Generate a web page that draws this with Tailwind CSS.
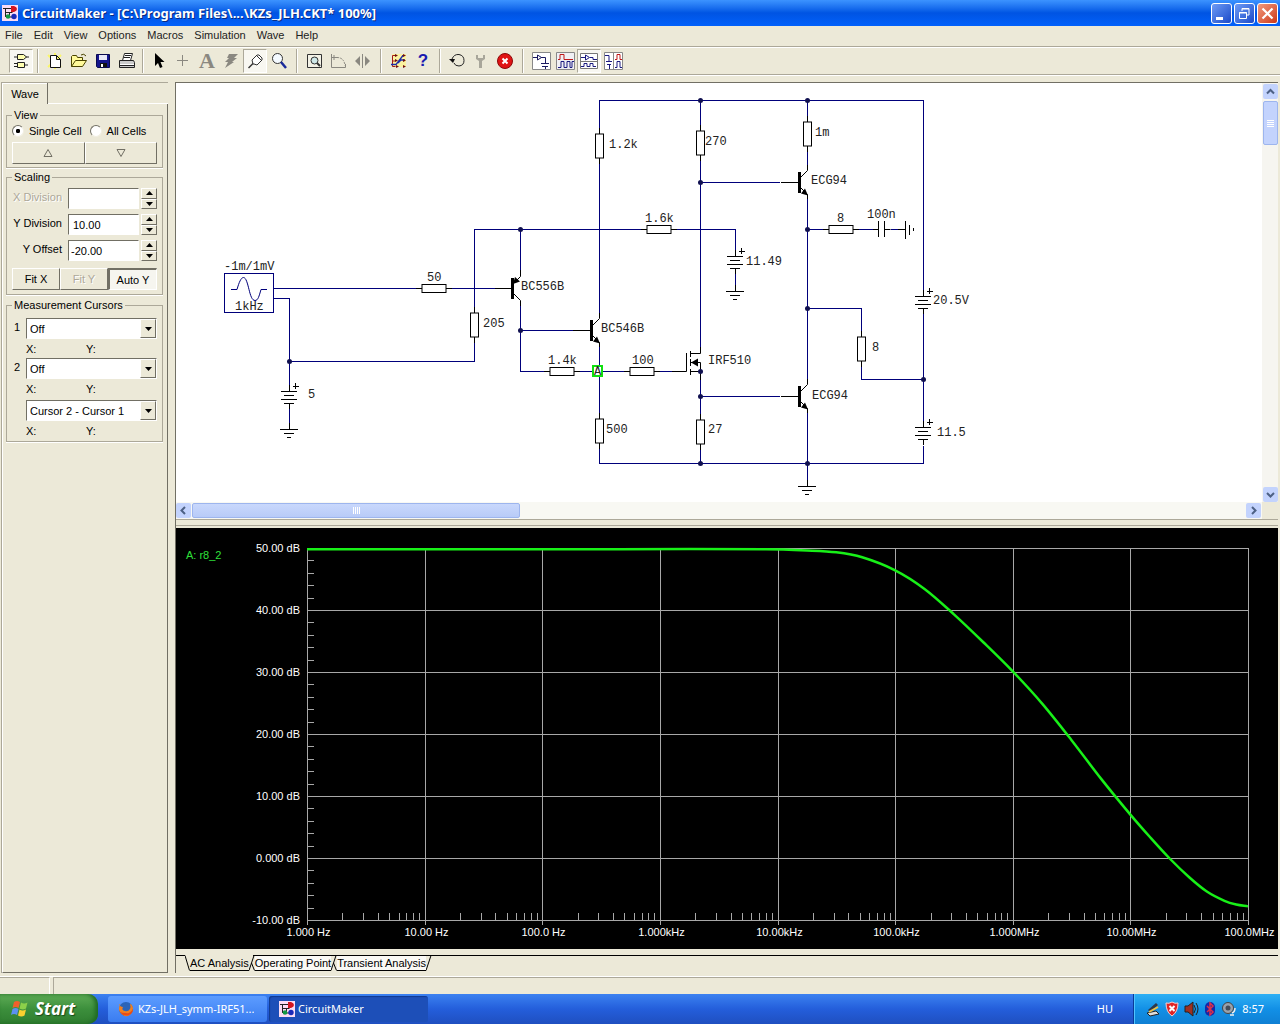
<!DOCTYPE html>
<html lang="en">
<head>
  <meta charset="UTF-8" />
  <meta name="viewport" content="width=device-width, initial-scale=1.0" />
  <title>CircuitMaker</title>
  <script src="https://cdn.jsdelivr.net/npm/@tailwindcss/browser@4"></script>
</head>
<body class="h-screen flex flex-col overflow-hidden bg-[#ece9d8] text-black text-[11px] leading-[14px] font-['Liberation_Sans',Arial,sans-serif]">

  <!-- Shared logo -->
  <svg class="hidden">
    <symbol id="logo" viewBox="0 0 16 16">
      <rect width="16" height="16" fill="#fbdcf4" />
      <path d="M1 3.500h9M3.500 3v9M3.500 7.500h7M7.500 7v4" fill="none" stroke="#222" />
      <path d="M4 12h6" stroke="#222" />
      <path d="M9 1h3q3 1 3 3t-3 3H9z" fill="#d31420" />
      <circle cx="6" cy="11.500" r="2.300" fill="#139a44" />
      <circle cx="12" cy="11.500" r="2.700" fill="#1a2ab8" />
    </symbol>
  </svg>

  <!-- Title bar -->
  <header class="flex h-[26px] shrink-0 items-center gap-1 bg-linear-to-b from-[#3c93ff] via-[#0054e3] to-[#0261fb] pl-0.5 pr-0.5">
    <svg class="size-4"><use href="#logo" /></svg>
    <h1 class="flex-1 truncate text-[13px] leading-[18px] font-bold text-white font-['Noto_Sans','Open_Sans',sans-serif] text-shadow-[1px_1px_0_#0a2a80]">CircuitMaker - [C:\Program Files\...\KZs_JLH.CKT* 100%]</h1>
    <div class="flex gap-0.5">
      <button aria-label="Minimize" class="h-[21px] w-[21px] rounded-[3px] border border-white bg-linear-to-br from-[#6f9bf5] to-[#1c48c8]">
        <svg class="size-[19px]" viewBox="0 0 19 19"><path d="M4 13h7v3H4z" fill="#fff" /></svg>
      </button>
      <button aria-label="Restore" class="h-[21px] w-[21px] rounded-[3px] border border-white bg-linear-to-br from-[#6f9bf5] to-[#1c48c8]">
        <svg class="size-[19px]" viewBox="0 0 19 19" fill="none" stroke="#fff"><path d="M7 7V4.500h7V11h-2M7 5h7" /><path d="M4.500 8.500h7v6h-7zM4 9h8" /></svg>
      </button>
      <button aria-label="Close" class="h-[21px] w-[21px] rounded-[3px] border border-white bg-linear-to-br from-[#f0997c] to-[#cc3310]">
        <svg class="size-[19px]" viewBox="0 0 19 19"><path d="M4.500 4.500l10 10M14.500 4.500l-10 10" stroke="#fff" stroke-width="2.200" /></svg>
      </button>
    </div>
  </header>

  <!-- Menu -->
  <nav class="flex h-5 shrink-0 items-center gap-[11px] pb-0.5 pl-[5px] text-[#222]">
    <a href="#">File</a>
    <a href="#">Edit</a>
    <a href="#">View</a>
    <a href="#">Options</a>
    <a href="#">Macros</a>
    <a href="#">Simulation</a>
    <a href="#">Wave</a>
    <a href="#">Help</a>
  </nav>

  <!-- Toolbar -->
  <div class="flex h-[29px] shrink-0 items-center border-y border-[#aca899] pl-[9px] shadow-[inset_0_1px_0_#fff,0_1px_0_#fff]">
    <button aria-label="Parts" class="size-6 border border-[#aca899] border-r-white border-b-white bg-[#f8f7f1]">
      <svg class="size-[22px]" viewBox="0 0 22 22" fill="#ffffb0" stroke="#222"><path d="M7.500 4.500h6l3 2.500-3 2.500h-6zM7.500 12.500h7v5h-7zM4 7h3.500M16 7h3M4 13.500h3.500M4 16.500h3.500M14.500 15H18" /></svg>
    </button>
    <i class="mx-1 h-6 w-0.5 border-l border-[#aca899] border-r border-r-white"></i>
    <button aria-label="New" class="size-6">
      <svg class="size-6" viewBox="0 0 24 24"><path d="M5 6l13 12M5 18L18 6M12 4v16" stroke="#fbf768" stroke-width="2" /><path d="M7.500 6.500h6l4 4v8h-10zM13.500 6.500v4h4" fill="#fff" stroke="#111" /></svg>
    </button>
    <button aria-label="Open" class="size-6">
      <svg class="size-6" viewBox="0 0 24 24" fill="#fffa9a" stroke="#4a4400"><path d="M4.500 17.500v-10l1-1h4l1 2h5v3M4.500 17.500l4-6h11l-4 6z" /><path d="M14 6q3-2 5 1" fill="none" /></svg>
    </button>
    <button aria-label="Save" class="size-6">
      <svg class="size-6" viewBox="0 0 24 24"><path d="M5.500 5.500h13v13h-12l-1-1z" fill="#15158c" stroke="#0a0a50" /><path d="M8 6h8v5H8z" fill="#e8e8f8" /><path d="M9 14h7v4H9z" fill="#111" /><path d="M10 15h2v3h-2z" fill="#fff" /></svg>
    </button>
    <button aria-label="Print" class="size-6">
      <svg class="size-6" viewBox="0 0 24 24" stroke="#222"><path d="M7.500 11.500l2-7h8l-2 7z" fill="#fff" /><path d="M10 6.500h6M9 8.500h6" /><path d="M4.500 11.500h14l1 2v5h-15z" fill="#ccc" /><path d="M5 15.500h14" stroke="#fff" /><path d="M5 16.500h14" /></svg>
    </button>
    <i class="mx-[3px] h-6 w-0.5 border-l border-[#aca899] border-r border-r-white"></i>
    <button aria-label="Select" class="size-6">
      <svg class="size-6" viewBox="0 0 24 24"><path d="M8 4v13l3-3 2 5 2.500-1-2-5h4z" fill="#000" /></svg>
    </button>
    <button aria-label="Wire" class="size-6">
      <svg class="size-6" viewBox="0 0 24 24"><path d="M6 11.500h11M11.500 6v11" stroke="#8a8880" /></svg>
    </button>
    <button aria-label="Text" class="size-6 text-[22px] leading-6 font-bold text-[#8a8880] font-['Liberation_Serif',serif]">A</button>
    <button aria-label="Delete" class="size-6">
      <svg class="size-6" viewBox="0 0 24 24"><path d="M10 5h9l-4 4h3l-5 4h2l-9 6 3-6H6l4-4H8z" fill="#8a8880" /></svg>
    </button>
    <button aria-label="Probe" class="size-6 border border-[#aca899] border-r-white border-b-white bg-[#f8f7f1]">
      <svg class="size-[22px]" viewBox="0 0 22 22" fill="none" stroke="#333"><path d="M4.500 18l5-5" stroke-width="1.500" /><path d="M9 14l-1-4 5-5h2l3 3v2l-5 5-3-1zM12 5l6 6" fill="#fff" /></svg>
    </button>
    <button aria-label="Zoom" class="size-6">
      <svg class="size-6" viewBox="0 0 24 24"><circle cx="10.500" cy="9.500" r="5" fill="#f4faff" stroke="#333" /><path d="M14 13l5 6" stroke="#1a2a9a" stroke-width="2.500" /></svg>
    </button>
    <i class="mx-[5px] h-6 w-0.5 border-l border-[#aca899] border-r border-r-white"></i>
    <button aria-label="Fit" class="size-6">
      <svg class="size-6" viewBox="0 0 24 24" fill="none" stroke="#333"><path d="M4.500 5.500h14v13h-14z" fill="#f3f2e6" /><circle cx="11.500" cy="11.500" r="3.500" fill="#cfe8e8" /><path d="M14 14l3 3" stroke-width="2" /></svg>
    </button>
    <button aria-label="Rotate" class="size-6">
      <svg class="size-6" viewBox="0 0 24 24" fill="none" stroke="#8a8880"><path d="M4.500 5v13.500h14V15M4.500 8.500h6M7 6v5" /><path d="M10 8.500q7 0 8 8" stroke-dasharray="2 1" /></svg>
    </button>
    <button aria-label="Mirror" class="size-6">
      <svg class="size-6" viewBox="0 0 24 24"><path d="M9 7v10l-5-5zM14 7v10l5-5z" fill="#8a8880" /><path d="M11.500 5v14" stroke="#8a8880" /></svg>
    </button>
    <i class="mx-[5px] h-6 w-0.5 border-l border-[#aca899] border-r border-r-white"></i>
    <button aria-label="Digital options" class="size-6">
      <svg class="size-6" viewBox="0 0 24 24" fill="none"><path d="M5 5h14v13H5z" fill="#fbf2a0" /><path d="M8.500 6.500h-3v11h3M5.500 12h3M15 6.500h3" stroke="#a01818" /><path d="M4 15.500h5l7-9M11 14l3-3h4" stroke="#1c2ca8" stroke-width="1.300" /><path d="M8 5l3 1.500L8 8zM8 10l3 1.500L8 13zM9 16l3 1.500L9 19zM16 5l3 1.500L16 8zM16 10l3 1.500-3 1.500zM16 16l3 1.500-3 1.500z" fill="#701010" /></svg>
    </button>
    <button aria-label="Help" class="size-6 text-[17px] leading-6 font-bold text-[#1a1ab0]">?</button>
    <i class="mx-1 h-6 w-0.5 border-l border-[#aca899] border-r border-r-white"></i>
    <button aria-label="Reset" class="size-6">
      <svg class="size-6" viewBox="0 0 24 24"><path d="M7 10q2-5 7-4.500 5 1 5 6t-5 5.500q-4 0-5-3" fill="none" stroke="#222" /><path d="M4 10h6l-2 4z" fill="#111" /></svg>
    </button>
    <button aria-label="Step" class="size-6">
      <svg class="size-6" viewBox="0 0 24 24"><path d="M7 6v4l3 2v7h3v-7l3-2V6h-2v3h-5V6z" fill="#a8a69a" /></svg>
    </button>
    <button aria-label="Stop" class="size-6">
      <svg class="size-6" viewBox="0 0 24 24"><circle cx="12" cy="12" r="7.500" fill="#e01414" stroke="#8c0808" /><path d="M9.500 9.500l5 5M14.500 9.500l-5 5" stroke="#fff" stroke-width="2" /></svg>
    </button>
    <i class="mx-[5px] h-6 w-0.5 border-l border-[#aca899] border-r border-r-white"></i>
    <button aria-label="Schematic view" class="size-6">
      <svg class="size-6" viewBox="0 0 24 24" fill="none" stroke="#1a1a60"><path d="M3.500 3.500h18v17h-18z" fill="#fff" stroke="#888" /><path d="M4 8.500h4M8.500 6v5l4-2.500zM12 8.500h4.500V14M12 14.500h8M13 17.500h6M16.500 17v3" /></svg>
    </button>
    <button aria-label="Waveform view" class="size-6">
      <svg class="size-6" viewBox="0 0 24 24" fill="none" stroke="#1a1a80"><path d="M3.500 3.500h18v17h-18z" fill="#f0f0f4" stroke="#888" /><path d="M5 10.500h2v-5h4v5h9" stroke="#c01818" /><path d="M5 18.500h3v-6h3v6h3v-6h3v6h2v-6h2" /></svg>
    </button>
    <button aria-label="Split view" class="size-6 border border-[#aca899] border-r-white border-b-white bg-[#f8f7f1]">
      <svg class="size-[22px]" viewBox="0 0 22 22" fill="none" stroke="#1a1a80"><path d="M2.500 3.500h17v15h-17zM3 11.500h16" fill="#fff" stroke="#777" /><path d="M3 7.500h4M7.500 5v5l4-2.500zM12 7.500h3v2h4" /><path d="M3 16.500h3v-3h3v3h3v-3h3v3h3" /></svg>
    </button>
    <button aria-label="Side view" class="size-6">
      <svg class="size-6" viewBox="0 0 24 24" fill="none" stroke="#1a1a80"><path d="M3.500 3.500h18v17h-18zM12.500 4v16" fill="#fff" stroke="#888" /><path d="M4 6.500h4V12M5 12.500h6M6 15.500h4M8.500 15v5" /><path d="M14 10.500h2v-5h3v5h2" stroke="#c01818" /><path d="M14 18.500h2v-6h3v6h2" /></svg>
    </button>
  </div>

  <main class="flex min-h-0 flex-1 pt-[7px] pb-[3px]">

    <!-- Wave panel -->
    <aside class="ml-px flex w-[167px] shrink-0 flex-col border-t border-l border-[#aca899]">
      <div class="flex h-[21px] items-stretch">
        <button class="w-[46px] border-r border-[#716f64] border-l border-l-white text-center shadow-[inset_0_1px_0_#fff]">Wave</button>
        <div class="flex-1 border-b border-white"></div>
      </div>
      <div class="flex-1 border-r border-b border-l border-[#716f64] border-l-white pt-1 pr-1 pl-[3px]">

        <fieldset class="mb-0.5 border border-[#aca899] px-[5px] pt-0.5 pb-[3px] shadow-[0_1px_0_#fff]">
          <legend class="px-0.5">View</legend>
          <div class="flex h-[14px] items-center gap-2">
            <label class="flex items-center gap-[5px]"><input type="radio" name="cells" checked class="size-3 appearance-none rounded-full border border-[#716f64] border-r-[#f1efe2] border-b-[#f1efe2] bg-white bg-radial from-black from-25% to-white to-35%" />Single Cell</label>
            <label class="flex items-center gap-[5px]"><input type="radio" name="cells" class="size-3 appearance-none rounded-full border border-[#716f64] border-r-[#f1efe2] border-b-[#f1efe2] bg-white" />All Cells</label>
          </div>
          <div class="mt-1 flex h-[22px]">
            <button aria-label="Previous cell" class="flex flex-1 items-center justify-center border border-white border-r-[#716f64] border-b-[#716f64]"><svg class="h-[10px] w-3" viewBox="0 0 12 10"><path d="M6 1.500l4 7H2z" fill="none" stroke="#716f64" /></svg></button>
            <button aria-label="Next cell" class="flex flex-1 items-center justify-center border border-white border-r-[#716f64] border-b-[#716f64]"><svg class="h-[10px] w-3" viewBox="0 0 12 10"><path d="M6 8.500l4-7H2z" fill="none" stroke="#716f64" /></svg></button>
          </div>
        </fieldset>

        <fieldset class="mb-[3px] border border-[#aca899] px-[5px] pt-1 pb-1 shadow-[0_1px_0_#fff]">
          <legend class="px-0.5">Scaling</legend>
          <div class="flex flex-col gap-[5px]">
            <div class="flex h-[21px] gap-0.5">
              <label for="xdiv" class="flex-1 pt-0.5 pr-1 text-right whitespace-nowrap text-[#aca899] text-shadow-[1px_1px_0_#fff]">X Division</label>
              <input id="xdiv" type="text" class="w-[71px] border border-[#716f64] border-r-white border-b-white bg-white px-1" />
              <div class="flex w-4 flex-col" data-spin></div>
            </div>
            <div class="flex h-[21px] gap-0.5">
              <label for="ydiv" class="flex-1 pt-0.5 pr-1 text-right whitespace-nowrap">Y Division</label>
              <input id="ydiv" type="text" value="10.00" class="w-[71px] border border-[#716f64] border-r-white border-b-white bg-white px-1" />
              <div class="flex w-4 flex-col" data-spin></div>
            </div>
            <div class="flex h-[21px] gap-0.5">
              <label for="yoff" class="flex-1 pt-0.5 pr-1 text-right whitespace-nowrap">Y Offset</label>
              <input id="yoff" type="text" value="-20.00" class="w-[71px] border border-[#716f64] border-r-white border-b-white bg-white px-0.5" />
              <div class="flex w-4 flex-col" data-spin></div>
            </div>
          </div>
          <div class="mt-[7px] flex h-[22px]">
            <button class="flex-1 border border-white border-r-[#716f64] border-b-[#716f64]">Fit X</button>
            <button disabled class="flex-1 border border-white border-r-[#716f64] border-b-[#716f64] text-[#aca899] text-shadow-[1px_1px_0_#fff]">Fit Y</button>
            <button class="flex-1 border-2 border-r border-b border-[#716f64] border-r-white border-b-white bg-[#f6f5ef]">Auto Y</button>
          </div>
        </fieldset>

        <fieldset class="border border-[#aca899] px-[5px] pt-1.5 pb-px shadow-[0_1px_0_#fff]">
          <legend class="px-0.5">Measurement Cursors</legend>
          <div class="flex h-[21px]">
            <label for="cur1" class="w-[14px] pt-0.5 pl-0.5">1</label>
            <div class="relative flex-1">
              <select id="cur1" class="h-full w-full appearance-none border border-[#716f64] border-r-white border-b-white bg-white px-[3px]"><option>Off</option></select>
              <span class="pointer-events-none absolute top-px right-px bottom-px flex w-4 items-center justify-center border border-white border-r-[#716f64] border-b-[#716f64] bg-[#ece9d8]"><svg class="h-1 w-[7px]"><path d="M0 0h7L3.500 4z" /></svg></span>
            </div>
          </div>
          <div class="flex h-[19px] items-center pl-[14px]"><span class="w-[60px]">X:</span><span>Y:</span></div>
          <div class="flex h-[21px]">
            <label for="cur2" class="w-[14px] pt-0.5 pl-0.5">2</label>
            <div class="relative flex-1">
              <select id="cur2" class="h-full w-full appearance-none border border-[#716f64] border-r-white border-b-white bg-white px-[3px]"><option>Off</option></select>
              <span class="pointer-events-none absolute top-px right-px bottom-px flex w-4 items-center justify-center border border-white border-r-[#716f64] border-b-[#716f64] bg-[#ece9d8]"><svg class="h-1 w-[7px]"><path d="M0 0h7L3.500 4z" /></svg></span>
            </div>
          </div>
          <div class="flex h-[19px] items-center pl-[14px]"><span class="w-[60px]">X:</span><span>Y:</span></div>
          <div class="mt-0.5 flex h-[21px] pl-[14px]">
            <div class="relative flex-1">
              <select aria-label="Cursor difference" class="h-full w-full appearance-none border border-[#716f64] border-r-white border-b-white bg-white px-[3px]"><option>Cursor 2 - Cursor 1</option></select>
              <span class="pointer-events-none absolute top-px right-px bottom-px flex w-4 items-center justify-center border border-white border-r-[#716f64] border-b-[#716f64] bg-[#ece9d8]"><svg class="h-1 w-[7px]"><path d="M0 0h7L3.500 4z" /></svg></span>
            </div>
          </div>
          <div class="flex h-[19px] items-center pl-[14px]"><span class="w-[60px]">X:</span><span>Y:</span></div>
        </fieldset>
      </div>
    </aside>

    <!-- Workspace -->
    <section class="ml-[7px] mr-0.5 flex min-w-0 flex-1 flex-col border-l border-[#716f64]">
      <div class="flex h-[420px] shrink-0 border-t border-[#716f64]">
        <div class="min-w-0 flex-1 overflow-hidden bg-white">
          <svg class="h-[419px] w-[1086px] text-[12px] font-['Liberation_Mono',monospace]" viewBox="176 83 1086 419" fill="none">
            <defs>
              <g id="rv"><path d="M.5-18V18" stroke="#000" /><rect x="-3.500" y="-12" width="8" height="24" fill="#fff" stroke="#000" /></g>
              <g id="rh"><path d="M-18 .5H18" stroke="#000" /><rect x="-12" y="-3.500" width="24" height="8" fill="#fff" stroke="#000" /></g>
              <g id="bat" stroke="#000"><path d="M.5-6V0M.5 12v6M-8 .5H8M-5 4.500H5M-8 8.500H8M-5 12.500H5M4-4.500h6M6.500-8v6" /></g>
              <g id="gnd" stroke="#000"><path d="M.5-6V0M-9 .5H9M-5 4.500H5M-2 8.500H2" /></g>
              <g id="npn"><path d="M-26 .5H-8" stroke="#000" /><path d="M-7.500-10v21" stroke="#000" stroke-width="3" /><path d="M-6-5L.5-11.500V-17M-6 6L.5 12.500V17" stroke="#000" /><path d="M1 13.500l-7-2 4-5z" fill="#000" /></g>
            </defs>

            <!-- wires -->
            <path stroke="#00007b" shape-rendering="crispEdges" d="M273 288.500H495M273 298.500h16.500V385M289.500 361.500h185V229.500h261V250M520.500 229.500V270M520.500 304v67.500H598M520.500 330.500H575M599.500 314V100.500h324V290M599.500 347V463.500M598 371.500h75M599 463.500h324.500V446M923.500 314V421M923.500 379.500h-62v-71h-54M700.500 100V353M700.500 371V463M700 182.500h80M700 396.500h80M807.500 100V166M807.500 198V380M807.500 412V480M807 229.500h20M857 229.500h16M891 229.500h8" />

            <use href="#rv" x="599" y="146" /><use href="#rv" x="700" y="143" /><use href="#rv" x="807" y="134" />
            <use href="#rv" x="474" y="325" /><use href="#rv" x="599" y="431" /><use href="#rv" x="700" y="432" /><use href="#rv" x="861" y="349" />
            <use href="#rh" x="434" y="288" /><use href="#rh" x="659" y="229" /><use href="#rh" x="841" y="229" />
            <use href="#rh" x="562" y="371" /><use href="#rh" x="642" y="371" />
            <use href="#bat" x="289" y="391" /><use href="#bat" x="735" y="256" /><use href="#bat" x="923" y="296" /><use href="#bat" x="923" y="427" />
            <path stroke="#00007b" d="M289.500 409V424M735.500 274V286" />
            <use href="#gnd" x="289" y="429" /><use href="#gnd" x="735" y="291" /><use href="#gnd" x="807" y="486" />
            <use href="#npn" x="599" y="330" /><use href="#npn" x="807" y="182" /><use href="#npn" x="807" y="396" />

            <!-- pnp -->
            <path stroke="#000" d="M495 288.500h17M514 283l6.500-6.500V270M514 294l6.500 6.500V306" />
            <path stroke="#000" stroke-width="3" d="M512.500 278v21" />
            <path fill="#000" d="M513 284l2-7 5 4.500z" />

            <!-- mosfet -->
            <path stroke="#000" d="M672 371.500h14.500V353M690.500 351v6M690.500 359v7M690.500 369v6M690 353.500h10.500V347M691 362.500h9.500V380M690 371.500h10" />
            <path fill="#000" d="M691 362.500l7-4v8z" />

            <!-- capacitor and side ground -->
            <path stroke="#000" d="M873 229.500h5.500M878.500 221v16M884.500 221v16M884.500 229.500h6M898 229.500h7.500M905.500 221v18M909.500 225v10M913.500 228v3" />

            <!-- source -->
            <rect x="224.500" y="273.500" width="49" height="39" stroke="#00007b" />
            <path stroke="#00007b" d="M231 289.500h6c2-7 4-12 6.500-12s4 6 5.500 12 3 11 6 11 4-4 6-11h6" />

            <g fill="#101050">
              <circle cx="520.500" cy="229.500" r="2.500" /><circle cx="520.500" cy="330.500" r="2.500" /><circle cx="289.500" cy="361.500" r="2.500" />
              <circle cx="700.500" cy="100.500" r="2.500" /><circle cx="807.500" cy="100.500" r="2.500" /><circle cx="700.500" cy="182.500" r="2.500" />
              <circle cx="807.500" cy="229.500" r="2.500" /><circle cx="807.500" cy="308.500" r="2.500" /><circle cx="923.500" cy="379.500" r="2.500" />
              <circle cx="700.500" cy="371.500" r="2.500" /><circle cx="700.500" cy="396.500" r="2.500" /><circle cx="700.500" cy="463.500" r="2.500" /><circle cx="807.500" cy="463.500" r="2.500" />
            </g>

            <rect x="593" y="366" width="9" height="10" fill="#fff" stroke="#10e010" stroke-width="2" />

            <g fill="#222">
              <text x="594" y="375">A</text>
              <text x="224" y="270">-1m/1mV</text><text x="235" y="310">1kHz</text><text x="427" y="281">50</text>
              <text x="483" y="327">205</text><text x="308" y="398">5</text><text x="521" y="290">BC556B</text>
              <text x="601" y="332">BC546B</text><text x="609" y="148">1.2k</text><text x="705" y="145">270</text>
              <text x="815" y="136">1m</text><text x="811" y="184">ECG94</text><text x="645" y="222">1.6k</text>
              <text x="837" y="222">8</text><text x="867" y="218">100n</text><text x="746" y="265">11.49</text>
              <text x="933" y="304">20.5V</text><text x="548" y="364">1.4k</text><text x="632" y="364">100</text>
              <text x="708" y="364">IRF510</text><text x="872" y="351">8</text><text x="812" y="399">ECG94</text>
              <text x="606" y="433">500</text><text x="708" y="433">27</text><text x="937" y="436">11.5</text>
            </g>
          </svg>
        </div>
        <!-- vertical scrollbar -->
        <div class="flex w-4 shrink-0 flex-col gap-0.5 bg-[#f6f5f0] pt-px pl-px">
          <button aria-label="Scroll up" class="flex size-[15px] items-center justify-center rounded-xs bg-[#c3d3fd]"><svg class="size-[9px]" viewBox="0 0 9 9"><path d="M1 6.500L4.500 3 8 6.500" fill="none" stroke="#4d6185" stroke-width="2" /></svg></button>
          <div class="flex h-[44px] w-[15px] flex-col items-center justify-center gap-px rounded-xs border border-[#9db5ee] bg-[#c3d3fd]">
            <i class="h-px w-[7px] bg-white"></i><i class="h-px w-[7px] bg-white"></i><i class="h-px w-[7px] bg-white"></i><i class="h-px w-[7px] bg-white"></i>
          </div>
          <button aria-label="Scroll down" class="mt-auto flex size-[15px] items-center justify-center rounded-xs bg-[#c3d3fd]"><svg class="size-[9px]" viewBox="0 0 9 9"><path d="M1 3L4.500 6.500 8 3" fill="none" stroke="#4d6185" stroke-width="2" /></svg></button>
        </div>
      </div>
      <!-- horizontal scrollbar -->
      <div class="flex h-[17px] shrink-0 pr-4">
        <div class="flex flex-1 items-center gap-px bg-[#f8f8f3]">
          <button aria-label="Scroll left" class="flex size-[15px] items-center justify-center rounded-xs bg-[#c3d3fd]"><svg class="size-[9px]" viewBox="0 0 9 9"><path d="M6 1L2.500 4.500 6 8" fill="none" stroke="#4d6185" stroke-width="2" /></svg></button>
          <div class="flex h-[15px] w-[328px] items-center justify-center gap-px rounded-xs border border-[#9db5ee] bg-linear-to-b from-[#c9d8fc] to-[#b8cbf8]">
            <i class="h-[7px] w-px bg-white"></i><i class="h-[7px] w-px bg-white"></i><i class="h-[7px] w-px bg-white"></i><i class="h-[7px] w-px bg-white"></i>
          </div>
          <button aria-label="Scroll right" class="ml-auto mr-px flex size-[15px] items-center justify-center rounded-xs bg-[#c3d3fd]"><svg class="size-[9px]" viewBox="0 0 9 9"><path d="M3 1l3.500 3.500L3 8" fill="none" stroke="#4d6185" stroke-width="2" /></svg></button>
        </div>
      </div>
      <div class="h-[9px] shrink-0 border-t border-[#aca899] pt-[5px]"><div class="h-px bg-[#aca899]"></div></div>

      <!-- plot -->
      <div class="min-h-0 flex-1 overflow-hidden bg-black"><svg id="plot" class="h-full w-full"></svg></div>

      <div class="mt-1.5 flex h-[18px] shrink-0 text-black">
        <div class="w-[9px] border-t border-black"></div>
        <svg class="h-4 w-[5px]" viewBox="0 0 5 16"><path d="M0 .5L4.500 15.500" fill="none" stroke="#000" /></svg>
        <button class="h-4 border-b border-black">AC Analysis</button>
        <svg class="h-4 w-[6px]" viewBox="0 0 6 16" fill="none" stroke="#000"><path d="M4 .5h2M5 .5L0 15.500M2.500 8L5.500 15.500" /></svg>
        <button class="h-4 border-y border-black bg-[#faf9f5]">Operating Point</button>
        <svg class="h-4 w-[6px]" viewBox="0 0 6 16" fill="none" stroke="#000"><path d="M0 .5h6M5 .5L0 15.500M2.500 8L5.500 15.500" /></svg>
        <button class="h-4 border-y border-black bg-[#faf9f5]">Transient Analysis</button>
        <svg class="h-4 w-[6px]" viewBox="0 0 6 16" fill="none" stroke="#000"><path d="M0 .5h6M5 .5L0 15.500" /></svg>
        <div class="flex-1 border-t border-black"></div>
      </div>
    </section>
  </main>

  <!-- Status bar -->
  <footer class="flex h-[18px] shrink-0 gap-[3px] border-t border-white">
    <div class="w-[50px] border-t border-r border-[#aca899] border-r-white"></div>
    <div class="flex-1 border-t border-l border-[#aca899]"></div>
  </footer>

  <!-- Taskbar -->
  <div class="flex h-[30px] shrink-0 items-stretch bg-linear-to-b from-[#3c81f0] via-[#245edb] to-[#1f4fc0] text-white font-['Noto_Sans',sans-serif]">
    <button class="flex w-[98px] items-center gap-1.5 rounded-r-[10px] bg-linear-to-b from-[#5eac56] via-[#3c8f3c] to-[#2f7d30] pl-[11px] text-[17px] leading-5 font-bold italic text-shadow-[1px_1px_1px_#1a4a1a] shadow-[inset_-3px_0_4px_#1f6a22] font-['Open_Sans','Noto_Sans',sans-serif]">
      <svg class="size-[18px]" viewBox="0 0 18 18"><path d="M3 2q3-2 6 0L7.500 8q-3-2-6 0z" fill="#f0602c" /><path d="M10 2.500q3 2 6.500 0L15 8.500q-3 2-6.500 0z" fill="#8cd04a" /><path d="M1.500 9q3-2 6 0L6 15q-3-2-6 0z" fill="#5c90f0" /><path d="M8.500 9.500q3 2 6.500 0l-1.500 6q-3 2-6.500 0z" fill="#fcd030" /></svg>
      Start
    </button>
    <div class="flex flex-1 items-center gap-0.5 pl-[10px]">
      <button class="flex h-[26px] w-[159px] items-center gap-1 rounded-[3px] bg-linear-to-b from-[#5c9cff] to-[#3a7cf0] pl-2.5">
        <svg class="size-4" viewBox="0 0 16 16"><circle cx="8" cy="8" r="7" fill="#2a64b8" /><path d="M2 3q-2 5 0 8 3 5 8 4 5-2 5-8-1-4-3-4 1 3 0 5-2 3-5 2-4-1-2-4-3 0-4-3z" fill="#f08020" /><path d="M2 11q4 5 9 3 4-2 4-6-3 5-7 4-4 0-6-1z" fill="#e84a18" /></svg>
        <span class="truncate">KZs-JLH_symm-IRF51...</span>
      </button>
      <button class="flex h-[26px] w-[159px] items-center gap-[3px] rounded-[3px] bg-[#1d4fb8] pl-2.5 shadow-[inset_1px_1px_1px_#123a90]">
        <svg class="size-4"><use href="#logo" /></svg>
        <span>CircuitMaker</span>
      </button>
    </div>
    <div class="flex items-center pr-5">HU</div>
    <div class="flex w-[147px] items-center gap-[3px] border-l border-[#0a3a98] bg-linear-to-b from-[#2eb0f4] via-[#1290e6] to-[#0f80d4] pl-[11px] shadow-[inset_1px_0_0_#50c4ff]">
      <svg class="size-4" viewBox="0 0 16 16"><path d="M2 12l9-2 3 3-9 2z" fill="#ddd" stroke="#222" /><path d="M3 9l8-7 2 2-8 7z" fill="#303848" /><path d="M4 11l9-5" stroke="#f0c040" stroke-width="2" /></svg>
      <svg class="size-4" viewBox="0 0 16 16"><path d="M8 1q3 2 6 1 0 9-6 13Q2 11 2 2q3 1 6-1z" fill="#e02424" stroke="#f8d0d0" /><path d="M5.500 5l5 5M10.500 5l-5 5" stroke="#fff" stroke-width="2" /></svg>
      <svg class="size-4" viewBox="0 0 16 16"><path d="M2 5h3l5-4v14l-5-4H2z" fill="#a03020" stroke="#222" /><path d="M11 4q3 4 0 8M13 2q4 6 0 12" fill="none" stroke="#222" /></svg>
      <svg class="size-4" viewBox="0 0 16 16"><rect x="3" y="1" width="10" height="14" rx="5" fill="#1428a8" /><path d="M5 5l6 6-3 3V2l3 3-6 6" fill="none" stroke="#e03048" stroke-width="1.500" /></svg>
      <svg class="size-4" viewBox="0 0 16 16"><circle cx="7" cy="7" r="5.500" fill="#9aa2ac" stroke="#444" /><circle cx="7" cy="7" r="2.500" fill="#444c58" /><path d="M11 12q3-1 3-5M9 14l4 0" fill="none" stroke="#eee" stroke-width="1.500" /></svg>
      <time class="ml-auto pr-4">8:57</time>
    </div>
  </div>

  <script>
    // spin buttons
    document.querySelectorAll("[data-spin]").forEach(box => {
      box.innerHTML = `
        <button aria-label="Increase" class="flex flex-1 items-center justify-center border border-white border-r-[#716f64] border-b-[#716f64]"><svg class="h-1 w-[7px]"><path d="M0 4h7L3.500 0z" /></svg></button>
        <button aria-label="Decrease" class="flex flex-1 items-center justify-center border border-white border-r-[#716f64] border-b-[#716f64]"><svg class="h-1 w-[7px]"><path d="M0 0h7L3.500 4z" /></svg></button>`;
    });

    const yLabels = ["50.00 dB", "40.00 dB", "30.00 dB", "20.00 dB", "10.00 dB", "0.000 dB", "-10.00 dB"];
    const xLabels = ["1.000 Hz", "10.00 Hz", "100.0 Hz", "1.000kHz", "10.00kHz", "100.0kHz", "1.000MHz", "10.00MHz", "100.0MHz"];
    // [decade, dB]
    const gain = [[0, 49.8], [2, 49.8], [3.9, 49.8], [4.25, 49.6], [4.5, 49.3], [4.72, 48.5], [5, 46.4], [5.25, 43.4], [5.5, 39.3], [5.75, 34.8],
      [6, 30.1], [6.25, 24.9], [6.5, 19], [6.75, 12.8], [7, 7], [7.17, 3.3], [7.33, 0], [7.5, -3.1], [7.65, -5.4], [7.8, -6.9], [7.9, -7.5], [8, -7.8]];

    function drawPlot() {
      const svg = document.getElementById("plot");
      const box = svg.parentElement;
      const left = 131, right = box.clientWidth - 30, top = 20, bottom = box.clientHeight - 29;
      const px = d => Math.round(left + d * (right - left) / 8) + 0.5;
      const py = v => Math.round(top + (50 - v) * (bottom - top) / 60) + 0.5;
      let grid = "", out = "";

      for (let d = 0; d <= 8; d++) {
        grid += `M${px(d)} ${top}V${bottom + 5}`;
        for (let k = 2; k < 10 && d < 8; k++) grid += `M${px(d + Math.log10(k))} ${bottom}v-7`;
        out += `<text x="${px(d) + 1}" y="${bottom + 16}" text-anchor="middle" class="fill-white">${xLabels[d]}</text>`;
      }
      for (let i = 0; i <= 6; i++) {
        grid += `M${left} ${py(50 - i * 10)}H${right + 1}`;
        for (let k = 2; k < 10 && i < 6; k += 2) grid += `M${left} ${py(50 - i * 10 - k)}h7`;
        out += `<text x="${left - 7}" y="${py(50 - i * 10) + 3.5}" text-anchor="end" class="fill-white">${yLabels[i]}</text>`;
      }

      // smooth curve through the points
      const p = gain.map(([d, v]) => [left + d * (right - left) / 8, top + (50 - v) * (bottom - top) / 60]);
      let curve = `M${p[0]}`;
      for (let i = 0; i < p.length - 1; i++) {
        const a = p[i - 1] || p[i], b = p[i], c = p[i + 1], e = p[i + 2] || c;
        const t = (c[0] - b[0]) / 3;
        const s1 = (c[1] - a[1]) / (c[0] - a[0]), s2 = (e[1] - b[1]) / (e[0] - b[0]);
        curve += `C${b[0] + t} ${b[1] + s1 * t} ${c[0] - t} ${c[1] - s2 * t} ${c}`;
      }
      svg.innerHTML = `<path d="${grid}" fill="none" stroke="#a8a8a8" shape-rendering="crispEdges"/>${out}
        <text x="10" y="31" class="fill-[#2fe03a]">A: r8_2</text>
        <path d="${curve}" fill="none" stroke="#18f018" stroke-width="2.5"/>`;
    }
    // redraw whenever the plot area gets a new size
    new ResizeObserver(drawPlot).observe(document.getElementById("plot").parentElement);
  </script>
</body>
</html>
